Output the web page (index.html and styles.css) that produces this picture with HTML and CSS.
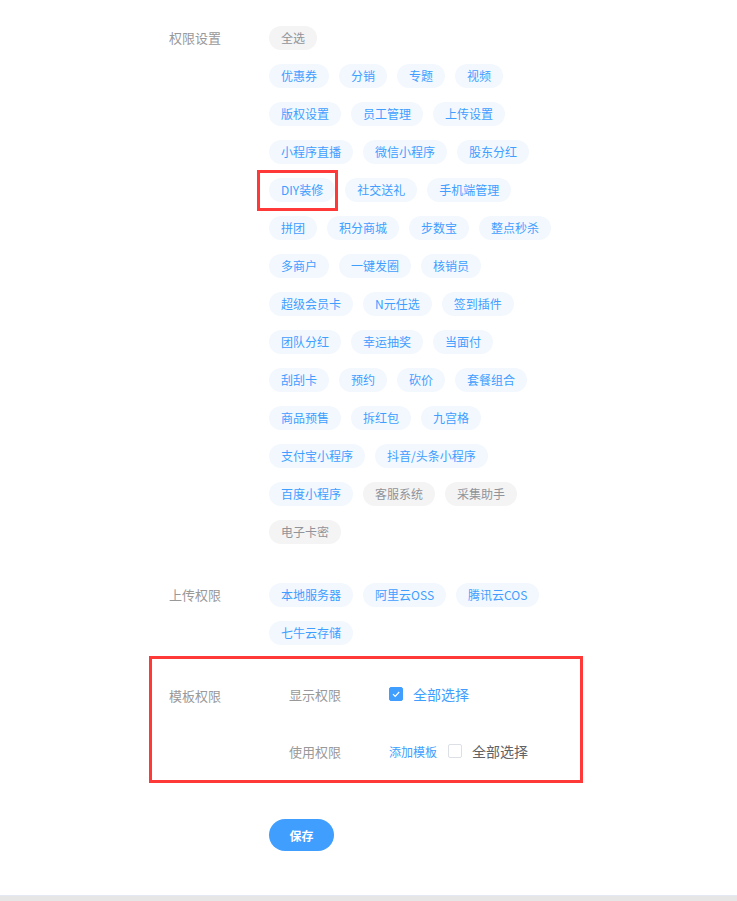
FILE: index.html
```html
<!DOCTYPE html>
<html lang="zh-CN">
<head>
    <meta charset="UTF-8">
    <meta name="viewport" content="width=device-width, initial-scale=1.0">
    <title>权限设置</title>
    <link rel="stylesheet" href="styles.css">
</head>
<body>
    <div class="page">
        <div class="form-row perm-section">
            <div class="form-label">权限设置</div>
            <div class="form-content tag-list">
                <div class="tag-row">
                    <span class="tag tag-grey">全选</span>
                </div>
                <div class="tag-row">
                    <span class="tag">优惠券</span>
                    <span class="tag">分销</span>
                    <span class="tag">专题</span>
                    <span class="tag">视频</span>
                </div>
                <div class="tag-row">
                    <span class="tag">版权设置</span>
                    <span class="tag">员工管理</span>
                    <span class="tag">上传设置</span>
                </div>
                <div class="tag-row">
                    <span class="tag">小程序直播</span>
                    <span class="tag">微信小程序</span>
                    <span class="tag">股东分红</span>
                </div>
                <div class="tag-row">
                    <span class="tag marked">DIY装修</span>
                    <span class="tag">社交送礼</span>
                    <span class="tag">手机端管理</span>
                </div>
                <div class="tag-row">
                    <span class="tag">拼团</span>
                    <span class="tag">积分商城</span>
                    <span class="tag">步数宝</span>
                    <span class="tag">整点秒杀</span>
                </div>
                <div class="tag-row">
                    <span class="tag">多商户</span>
                    <span class="tag">一键发圈</span>
                    <span class="tag">核销员</span>
                </div>
                <div class="tag-row">
                    <span class="tag">超级会员卡</span>
                    <span class="tag">N元任选</span>
                    <span class="tag">签到插件</span>
                </div>
                <div class="tag-row">
                    <span class="tag">团队分红</span>
                    <span class="tag">幸运抽奖</span>
                    <span class="tag">当面付</span>
                </div>
                <div class="tag-row">
                    <span class="tag">刮刮卡</span>
                    <span class="tag">预约</span>
                    <span class="tag">砍价</span>
                    <span class="tag">套餐组合</span>
                </div>
                <div class="tag-row">
                    <span class="tag">商品预售</span>
                    <span class="tag">拆红包</span>
                    <span class="tag">九宫格</span>
                </div>
                <div class="tag-row">
                    <span class="tag">支付宝小程序</span>
                    <span class="tag">抖音/头条小程序</span>
                </div>
                <div class="tag-row">
                    <span class="tag">百度小程序</span>
                    <span class="tag tag-grey">客服系统</span>
                    <span class="tag tag-grey">采集助手</span>
                </div>
                <div class="tag-row">
                    <span class="tag tag-grey">电子卡密</span>
                </div>
            </div>
        </div>

        <div class="form-row upload-section">
            <div class="form-label">上传权限</div>
            <div class="form-content tag-list">
                <div class="tag-row">
                    <span class="tag">本地服务器</span>
                    <span class="tag">阿里云OSS</span>
                    <span class="tag">腾讯云COS</span>
                </div>
                <div class="tag-row">
                    <span class="tag">七牛云存储</span>
                </div>
            </div>
        </div>

        <div class="form-row template-section">
            <div class="form-label">模板权限</div>
            <div class="form-content">
                <div class="sub-row">
                    <div class="sub-label">显示权限</div>
                    <label class="checkbox is-checked">
                        <span class="checkbox-box">
                            <svg viewBox="0 0 14 14" width="14" height="14"><path d="M4 7.2l2.2 2.2L10.2 5" fill="none" stroke="#fff" stroke-width="1.2"/></svg>
                        </span>
                        <span class="checkbox-text">全部选择</span>
                    </label>
                </div>
                <div class="sub-row sub-row-use">
                    <div class="sub-label">使用权限</div>
                    <a class="link-btn">添加模板</a>
                    <label class="checkbox">
                        <span class="checkbox-box"></span>
                        <span class="checkbox-text">全部选择</span>
                    </label>
                </div>
            </div>
        </div>

        <div class="form-row save-row">
            <div class="form-label"></div>
            <div class="form-content">
                <button class="btn-save">保存</button>
            </div>
        </div>
    </div>
    <div class="footer-bar"></div>
</body>
</html>
```

FILE: styles.css
```css
:root {
    --primary-color: #409eff;
    --tag-background: #f3f8ff;
    --grey-background: #f4f4f5;
    --label-color: #999999;
    --text-color: #606266;
    --mark-color: #ff3838;
}

* {
    margin: 0;
    padding: 0;
    box-sizing: border-box;
}

body {
    font-family: "Noto Sans CJK SC", "Noto Sans", sans-serif;
    color: var(--text-color);
    background-color: #ffffff;
}

.page {
    padding: 26px 0 0 149px;
}

.form-row {
    display: flex;
    padding-left: 20px;
}

.form-label {
    width: 100px;
    flex-shrink: 0;
    font-size: 13px;
    line-height: 24px;
    color: var(--label-color);
}

.form-content {
    flex: 1;
}

.tag-list {
    display: flex;
    flex-direction: column;
    gap: 14px;
}

.tag-row {
    display: flex;
    gap: 10px;
}

.tag {
    display: inline-block;
    height: 24px;
    line-height: 24px;
    padding: 0 12px;
    border-radius: 12px;
    font-size: 12px;
    white-space: nowrap;
    color: var(--primary-color);
    background-color: var(--tag-background);
}

.tag-grey {
    color: #909399;
    background-color: var(--grey-background);
}

/* annotation box */
.marked {
    position: relative;
}

.marked::after {
    content: '';
    position: absolute;
    top: -8px;
    bottom: -9px;
    left: -12px;
    right: -3px;
    border: 3px solid var(--mark-color);
}

.upload-section {
    margin-top: 39px;
}

.template-section {
    margin-top: 11px;
    width: 434px;
    padding: 15px 0 9px 17px;
    border: 3px solid var(--mark-color);
}

.template-section .form-label {
    line-height: 40px;
    margin-top: 2px;
}

.sub-row {
    display: flex;
    align-items: center;
    height: 40px;
    padding-left: 20px;
}

.sub-row-use {
    margin-top: 17px;
}

.sub-label {
    width: 100px;
    font-size: 13px;
    color: var(--label-color);
}

.link-btn {
    font-size: 12px;
    color: var(--primary-color);
    margin-right: 11px;
    cursor: pointer;
}

.checkbox {
    display: inline-flex;
    align-items: center;
    cursor: pointer;
}

.checkbox-box {
    display: inline-block;
    width: 14px;
    height: 14px;
    border: 1px solid #dcdfe6;
    border-radius: 2px;
    background-color: #fff;
    position: relative;
}

.checkbox-box svg {
    position: absolute;
    top: -1px;
    left: -1px;
}

.is-checked .checkbox-box {
    background-color: var(--primary-color);
    border-color: var(--primary-color);
}

.checkbox-text {
    margin-left: 10px;
    font-size: 14px;
    color: var(--text-color);
}

.is-checked .checkbox-text {
    color: var(--primary-color);
}

.save-row {
    margin-top: 36px;
}

.btn-save {
    width: 65px;
    height: 32px;
    border: none;
    border-radius: 16px;
    background-color: var(--primary-color);
    color: #fff;
    font-family: inherit;
    font-size: 12px;
    font-weight: 600;
    cursor: pointer;
}

.footer-bar {
    margin-top: 44px;
    height: 6px;
    background-color: #e6e6e6;
    border-top: 1px solid #e4e8f2;
}
```
